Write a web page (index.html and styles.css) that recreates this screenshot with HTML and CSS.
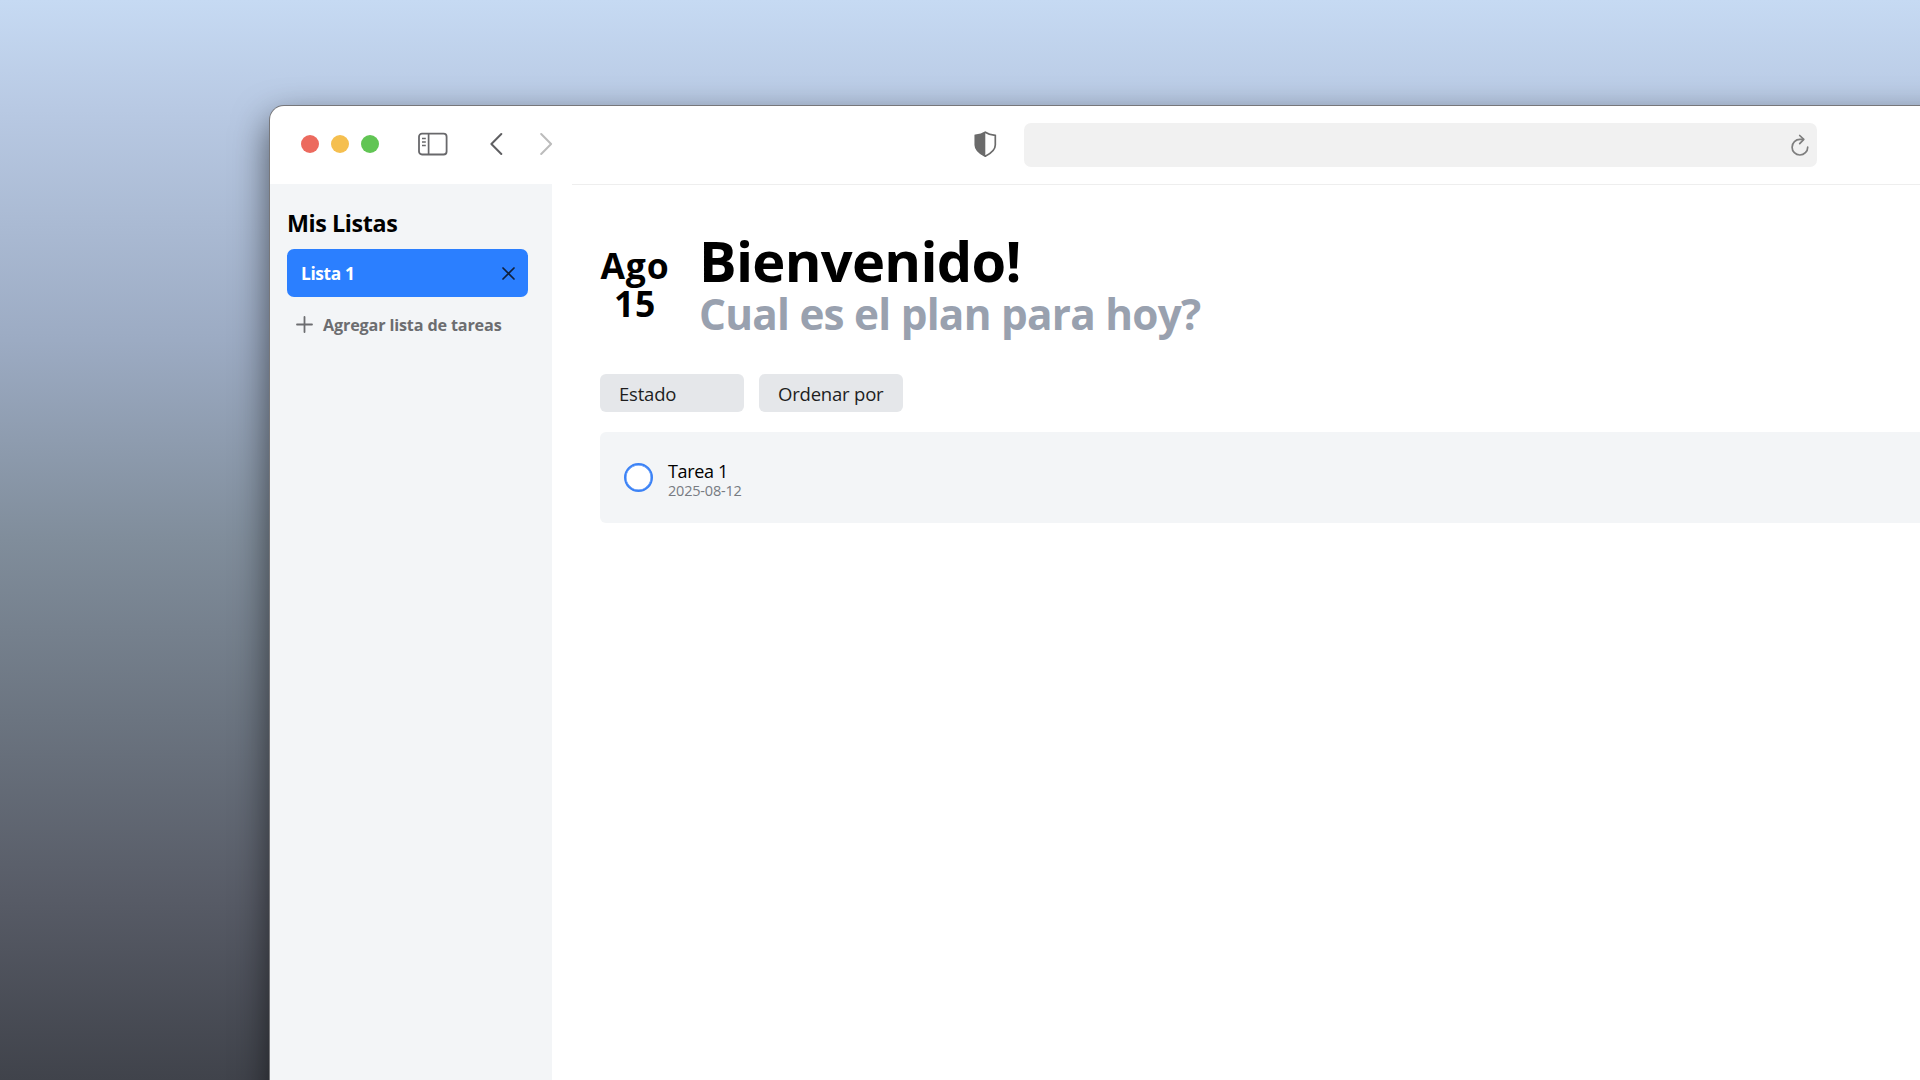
FILE: index.html
```html
<!DOCTYPE html>
<html lang="es">
<head>
<meta charset="utf-8">
<title>Mis Listas</title>
<link rel="stylesheet" href="styles.css">
</head>
<body>
<div class="window">
  <header class="toolbar">
    <div class="lights"><i class="light red"></i><i class="light yellow"></i><i class="light green"></i></div>
    <svg class="panel-icon" width="30" height="24" viewBox="0 0 30 24" fill="none" stroke="#68686b"><rect x="1" y="1.7" width="27.6" height="20.8" rx="3" stroke-width="1.8"/><path d="M10.6 1.7v20.8" stroke-width="1.7"/><path d="M4 6.5h3.8M4 10h3.8M4 13.5h3.8" stroke-width="1.3"/></svg>
    <svg class="back" width="14" height="24" viewBox="0 0 14 24" fill="none" stroke="#606063" stroke-width="2" stroke-linecap="round" stroke-linejoin="round"><path d="M11.3 2 1.4 12l9.9 10"/></svg>
    <svg class="forward" width="14" height="24" viewBox="0 0 14 24" fill="none" stroke="#bcbcbc" stroke-width="2" stroke-linecap="round" stroke-linejoin="round"><path d="M1.2 2 11.1 12 1.2 22"/></svg>
    <svg class="shield" width="23" height="26" viewBox="0 0 23 26"><path d="M11.3 1.2C8.4 3.2 5 4 1.3 4.4V14c0 5 4.5 8.5 10 11.2 5.5-2.7 10-6.2 10-11.2V4.4C17.6 4 14.2 3.2 11.3 1.2z" fill="#fff" stroke="#6b6b6b" stroke-width="1.7"/><path d="M11.3 1.2C8.4 3.2 5 4 1.3 4.4V14c0 5 4.5 8.5 10 11.2z" fill="#6b6b6b"/></svg>
    <div class="address">
      <svg width="18" height="23" viewBox="0 0 18 23" fill="none" stroke="#7e7e7e" stroke-width="1.7" stroke-linecap="round" stroke-linejoin="round"><path d="M12.2 5.4H9A7.8 7.8 0 1 0 16.7 13.2"/><path d="M8.7 1.5l4.1 3.9-4.1 4.2"/></svg>
    </div>
  </header>
  <div class="body">
    <aside class="sidebar">
      <h2 class="side-title">Mis Listas</h2>
      <div class="list-item"><span class="list-name">Lista 1</span>
        <svg width="13" height="13" viewBox="0 0 13 13" stroke="#10203c" stroke-width="1.7" stroke-linecap="round"><path d="M1 1l11 11M12 1 1 12"/></svg>
      </div>
      <div class="add-list">
        <svg width="17" height="17" viewBox="0 0 17 17" stroke="#6c6d70" stroke-width="1.8" stroke-linecap="round"><path d="M8.5 1v15M1 8.5h15"/></svg>
        <span>Agregar lista de tareas</span>
      </div>
    </aside>
    <main class="content">
      <section class="hero">
        <div class="date"><span>Ago</span><span>15</span></div>
        <div class="greeting"><h1>Bienvenido!</h1><p>Cual es el plan para hoy?</p></div>
      </section>
      <div class="filters"><div class="filter">Estado</div><div class="filter">Ordenar por</div></div>
      <article class="task">
        <i class="check"></i>
        <div class="task-text"><span class="task-name">Tarea 1</span><span class="task-date">2025-08-12</span></div>
      </article>
    </main>
  </div>
</div>
</body>
</html>
```
FILE: styles.css
```css
* { box-sizing: border-box; }
body {
  margin: 0;
  height: 1080px;
  overflow: hidden;
  padding: 106px 0 0 270px;
  background: linear-gradient(#c6daf3 0, #b8c9e3 110px, #9cabc3 340px, #808d9b 540px, #6b7480 720px, #575b66 900px, #40434b 1080px);
  font-family: "Open Sans", "Noto Sans", sans-serif;
  color: #000;
}
h1, h2, p { margin: 0; white-space: nowrap; }
span { white-space: nowrap; }
svg { display: block; flex: none; }
.window {
  width: 1900px;
  height: 1100px;
  border-radius: 14px;
  background: #fff;
  overflow: hidden;
  box-shadow: 0 0 0 1px #77777a, 0 14px 36px rgba(0, 0, 0, .6);
}
.toolbar { height: 78px; display: flex; align-items: center; padding: 0 0 2px 31px; }
.lights { display: flex; gap: 12px; margin-right: 39px; }
.light { width: 18px; height: 18px; border-radius: 50%; }
.red { background: #ec6a5e; }
.yellow { background: #f5bf4f; }
.green { background: #61c554; }
.back { margin-left: 42px; }
.forward { margin-left: 36px; }
.shield { margin-left: 420px; }
.address {
  width: 793px; height: 44px; margin: 2px 0 0 27px; padding: 0 8px 0 0;
  border-radius: 7px; background: #f1f1f1;
  display: flex; align-items: center; justify-content: flex-end;
}
.body { display: flex; height: 1000px; }
.sidebar { width: 282px; padding: 21px 24px 0 17px; background: #f3f5f7; }
.side-title { font-size: 23.3px; line-height: 36px; font-weight: 700; letter-spacing: -.4px; }
.list-item {
  height: 48px; margin-top: 8px; padding: 0 13px 0 14px; border-radius: 7px;
  background: #2b7fff; color: #fff;
  display: flex; align-items: center; justify-content: space-between;
}
.list-name { font-size: 17.3px; font-weight: 700; letter-spacing: -.35px; }
.add-list {
  display: flex; align-items: center; gap: 10px; height: 55px; padding-left: 9px;
  font-size: 16.2px; font-weight: 700; letter-spacing: -.16px; color: #6c6d70;
}
.add-list span { padding-top: 1px; }
.content { flex: 1; margin-left: 20px; padding: 46px 0 0 28px; border-top: 1px solid #eee; }
.hero { display: flex; gap: 29px; }
.date { width: 70px; padding-top: 15px; display: flex; flex-direction: column; align-items: center; font-size: 35.5px; line-height: 38px; font-weight: 700; letter-spacing: .8px; }
.greeting h1 { font-size: 56px; line-height: 58px; letter-spacing: -.7px; }
.greeting p { font-size: 42.3px; line-height: 50px; font-weight: 700; color: #99a1af; letter-spacing: -.76px; }
.filters { display: flex; gap: 15px; margin-top: 35px; }
.filter { width: 144px; height: 38px; padding-left: 19px; border-radius: 6px; background: #e5e7ea; font-size: 18.5px; line-height: 40px; letter-spacing: -.2px; color: #1e1e1e; white-space: nowrap; }
.task { margin-top: 20px; height: 91px; padding-left: 24px; border-radius: 6px; background: #f3f5f7; display: flex; align-items: center; gap: 15px; }
.check { width: 29px; height: 29px; border: 2px solid #3b82f6; border-radius: 50%; background: #fff; box-shadow: inset 0 0 0 .5px #3b82f6; }
.task-text { display: flex; flex-direction: column; padding-top: 5px; }
.task-name { font-size: 18px; line-height: 22px; letter-spacing: -.35px; }
.task-date { font-size: 14.5px; line-height: 18px; letter-spacing: -.2px; color: #777b82; }
```
